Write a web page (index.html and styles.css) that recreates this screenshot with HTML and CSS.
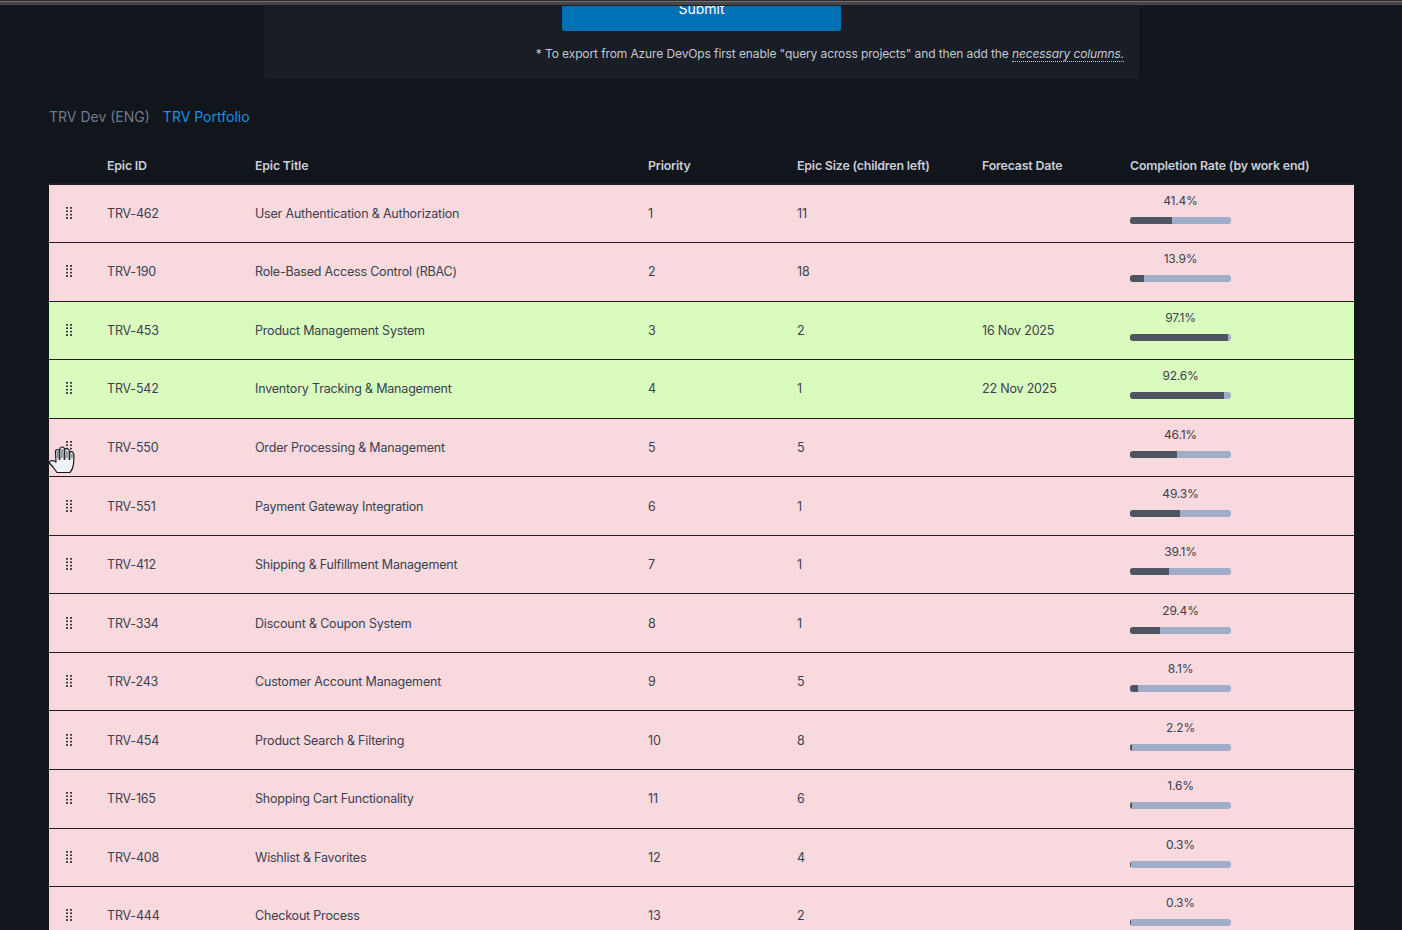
FILE: index.html
```html
<!DOCTYPE html>
<html lang="en">
<head>
    <meta charset="utf-8">
    <title>Epic Priorities</title>
    <link rel="stylesheet" href="styles.css">
</head>
<body>
    <div class="topbar"></div>
    <div class="page">
        <div class="form-card">
            <button class="submit">Submit</button>
            <p class="note">* To export from Azure DevOps first enable "query across projects" and then add the <span class="note-link">necessary columns.</span></p>
        </div>

        <div class="tabs">
            <a class="tab">TRV Dev (ENG)</a>
            <a class="tab active">TRV Portfolio</a>
        </div>

        <table class="epics">
            <thead>
                <tr>
                    <th class="col-drag"></th>
                    <th class="col-id">Epic ID</th>
                    <th class="col-title">Epic Title</th>
                    <th class="col-priority">Priority</th>
                    <th class="col-size">Epic Size (children left)</th>
                    <th class="col-date">Forecast Date</th>
                    <th class="col-rate">Completion Rate (by work end)</th>
                </tr>
            </thead>
            <tbody>
                <tr class="late">
                    <td><span class="grip"></span></td><td>TRV-462</td><td>User Authentication &amp; Authorization</td><td>1</td><td>11</td><td></td>
                    <td><div class="rate"><span>41.4%</span><div class="bar"><div class="fill" style="width:41.4%"></div></div></div></td>
                </tr>
                <tr class="late">
                    <td><span class="grip"></span></td><td>TRV-190</td><td>Role-Based Access Control (RBAC)</td><td>2</td><td>18</td><td></td>
                    <td><div class="rate"><span>13.9%</span><div class="bar"><div class="fill" style="width:13.9%"></div></div></div></td>
                </tr>
                <tr class="on-track">
                    <td><span class="grip"></span></td><td>TRV-453</td><td>Product Management System</td><td>3</td><td>2</td><td>16 Nov 2025</td>
                    <td><div class="rate"><span>97.1%</span><div class="bar"><div class="fill" style="width:97.1%"></div></div></div></td>
                </tr>
                <tr class="on-track">
                    <td><span class="grip"></span></td><td>TRV-542</td><td>Inventory Tracking &amp; Management</td><td>4</td><td>1</td><td>22 Nov 2025</td>
                    <td><div class="rate"><span>92.6%</span><div class="bar"><div class="fill" style="width:92.6%"></div></div></div></td>
                </tr>
                <tr class="late">
                    <td class="drag-cell"><span class="grip"></span>
                        <svg class="hand" width="26" height="28" viewBox="0 0 26 28"><path d="M8 26.5 L4 21 L0.8 17.5 Q0 15.5 2 14.8 Q4.5 14 7 16 L6.5 6 Q6.5 3.5 8.5 3.5 Q10 3.5 10.5 5 L11 2.5 Q11.5 0.8 13.5 1 Q15.5 1.2 15.5 3.5 Q17 2 19 3 Q20.5 4 20.5 6 Q22.5 5 24 6.5 Q25 8 25 10 L24.5 18 Q24 23 21 26.5 Z" fill="#eef2f6" stroke="#15171c" stroke-width="1.2" stroke-linejoin="round"/><path d="M10.5 4.5 V14 M15.5 3.5 V14 M20.5 6 V14" stroke="#2a2d33" stroke-width="1.8" fill="none"/><path d="M8.5 5 V12 M13 3 V12 M18 5 V12 M23 8 V12" stroke="#7d828a" stroke-width="1.5" fill="none"/></svg>
                    </td><td>TRV-550</td><td>Order Processing &amp; Management</td><td>5</td><td>5</td><td></td>
                    <td><div class="rate"><span>46.1%</span><div class="bar"><div class="fill" style="width:46.1%"></div></div></div></td>
                </tr>
                <tr class="late">
                    <td><span class="grip"></span></td><td>TRV-551</td><td>Payment Gateway Integration</td><td>6</td><td>1</td><td></td>
                    <td><div class="rate"><span>49.3%</span><div class="bar"><div class="fill" style="width:49.3%"></div></div></div></td>
                </tr>
                <tr class="late">
                    <td><span class="grip"></span></td><td>TRV-412</td><td>Shipping &amp; Fulfillment Management</td><td>7</td><td>1</td><td></td>
                    <td><div class="rate"><span>39.1%</span><div class="bar"><div class="fill" style="width:39.1%"></div></div></div></td>
                </tr>
                <tr class="late">
                    <td><span class="grip"></span></td><td>TRV-334</td><td>Discount &amp; Coupon System</td><td>8</td><td>1</td><td></td>
                    <td><div class="rate"><span>29.4%</span><div class="bar"><div class="fill" style="width:29.4%"></div></div></div></td>
                </tr>
                <tr class="late">
                    <td><span class="grip"></span></td><td>TRV-243</td><td>Customer Account Management</td><td>9</td><td>5</td><td></td>
                    <td><div class="rate"><span>8.1%</span><div class="bar"><div class="fill" style="width:8.1%"></div></div></div></td>
                </tr>
                <tr class="late">
                    <td><span class="grip"></span></td><td>TRV-454</td><td>Product Search &amp; Filtering</td><td>10</td><td>8</td><td></td>
                    <td><div class="rate"><span>2.2%</span><div class="bar"><div class="fill" style="width:2.2%"></div></div></div></td>
                </tr>
                <tr class="late">
                    <td><span class="grip"></span></td><td>TRV-165</td><td>Shopping Cart Functionality</td><td>11</td><td>6</td><td></td>
                    <td><div class="rate"><span>1.6%</span><div class="bar"><div class="fill" style="width:1.6%"></div></div></div></td>
                </tr>
                <tr class="late">
                    <td><span class="grip"></span></td><td>TRV-408</td><td>Wishlist &amp; Favorites</td><td>12</td><td>4</td><td></td>
                    <td><div class="rate"><span>0.3%</span><div class="bar"><div class="fill" style="width:0.3%"></div></div></div></td>
                </tr>
                <tr class="late">
                    <td><span class="grip"></span></td><td>TRV-444</td><td>Checkout Process</td><td>13</td><td>2</td><td></td>
                    <td><div class="rate"><span>0.3%</span><div class="bar"><div class="fill" style="width:0.3%"></div></div></div></td>
                </tr>
            </tbody>
        </table>
    </div>
</body>
</html>
```

FILE: styles.css
```css
html, body {
    height: 100%;
}
body {
    font-family: "Inter", "Liberation Sans", sans-serif;
    margin: 0;
    padding: 0;
    background: #11151c;
    color: #c9ced6;
    overflow: hidden;
}
.topbar {
    height: 6px;
    background: linear-gradient(#2a2c30 0 1px, #6e6e6e 1px 2px, #45464a 2px 5px, #1c1e22 5px);
}
.page {
    padding: 0 48px 0 49px;
}
.form-card {
    width: 875px;
    height: 73px;
    margin: 0 auto;
    background: #191d26;
    border-radius: 0 0 4px 4px;
    display: flex;
    flex-direction: column;
    align-items: center;
    box-sizing: border-box;
}
.submit {
    width: 279px;
    height: 25px;
    background: #0071b5;
    color: #fff;
    border: none;
    border-radius: 0 0 3px 3px;
    font-family: inherit;
    font-size: 14px;
    line-height: 4px;
    padding: 0 0 20px;
    overflow: hidden;
}
.note {
    margin: 15px 0 0;
    font-size: 12px;
    letter-spacing: -0.11px;
    line-height: 16px;
    color: #c3c8d0;
    align-self: flex-end;
    padding-right: 15px;
}
.note-link {
    font-style: italic;
    border-bottom: 1px dotted #c3c8d0;
}
.tabs {
    display: flex;
    gap: 13px;
    margin-top: 28px;
    font-size: 14px;
    line-height: 20px;
}
.tab {
    color: #6f7b8c;
}
.tab.active {
    color: #1c8fe3;
}
.epics {
    width: 1305px;
    border-collapse: collapse;
    table-layout: fixed;
    margin-top: 20.5px;
    font-size: 12.5px;
    letter-spacing: -0.19px;
}
.epics th {
    text-align: left;
    font-weight: 600;
    font-size: 12.4px;
    color: #c9ced6;
    height: 35.5px;
    padding: 0;
    border-bottom: 2px solid #1c2029;
}
.col-drag { width: 58px; }
.col-id { width: 148px; }
.col-title { width: 393px; }
.col-priority { width: 149px; }
.col-size { width: 185px; }
.col-date { width: 148px; }
.epics td {
    height: 58.55px;
    padding: 0;
    color: #3a4150;
    border-bottom: 1px solid #201a22;
    box-sizing: border-box;
}
.late td {
    background: #f8d9dd;
}
.on-track td {
    background: #d9fbbd;
}
.drag-cell {
    position: relative;
}
.grip {
    display: block;
    width: 6px;
    height: 13px;
    margin-left: 16.5px;
    background-image: radial-gradient(circle at 1px 1px, #343a47 1.1px, transparent 1.2px);
    background-size: 4px 3.4px;
}
.hand {
    position: absolute;
    left: 0;
    top: 27px;
}
.rate {
    width: 101px;
    display: flex;
    flex-direction: column;
    align-items: center;
    gap: 8px;
    font-size: 12px;
    line-height: 16px;
    margin-top: -10px;
}
.bar {
    width: 100%;
    height: 7px;
    background: #9fadc8;
    border-radius: 3px;
    overflow: hidden;
}
.fill {
    height: 100%;
    background: #4f5560;
}
```
